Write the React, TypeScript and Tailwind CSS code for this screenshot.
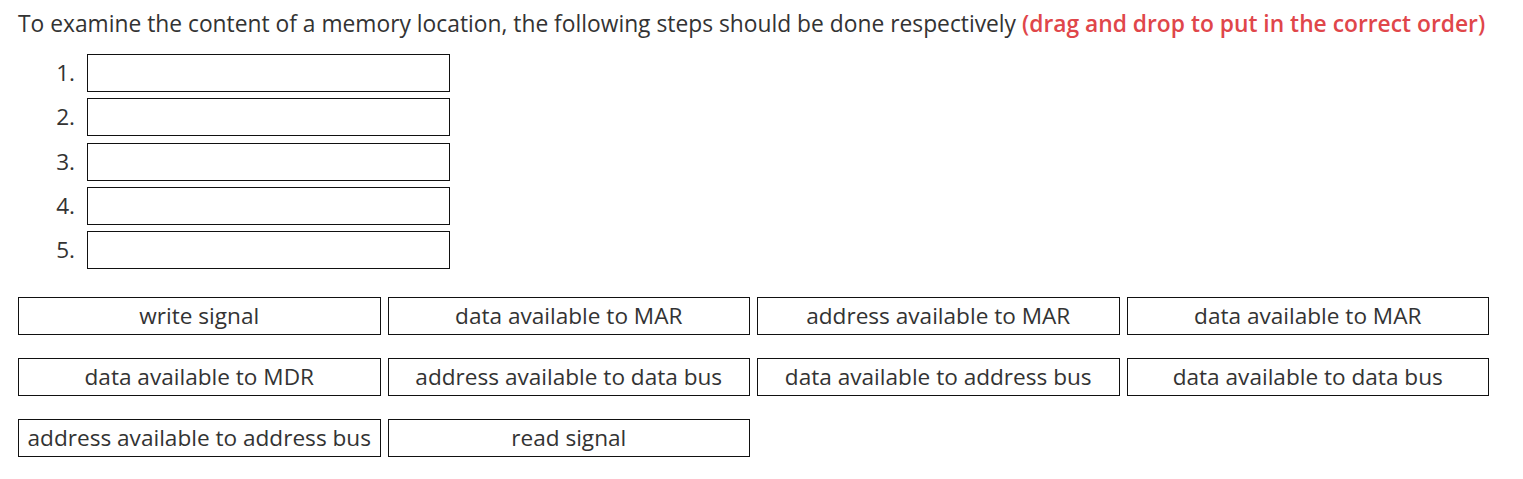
const slots = [1, 2, 3, 4, 5]

const items = [
  'write signal',
  'data available to MAR',
  'address available to MAR',
  'data available to MAR',
  'data available to MDR',
  'address available to data bus',
  'data available to address bus',
  'data available to data bus',
  'address available to address bus',
  'read signal',
]

export default function App() {
  return (
    <div
      className="min-h-[479px] bg-white pl-[18px] pt-[7px] text-[#333333]"
      style={{ fontFamily: '"Open Sans", "Liberation Sans", sans-serif' }}
    >
      {/* Question */}
      <p className="text-[22.8px] leading-[34px] whitespace-nowrap">
        To examine the content of a memory location, the following steps should be done respectively{' '}
        <span className="font-semibold text-[#e0464a]">(drag and drop to put in the correct order)</span>
      </p>

      {/* Drop slots */}
      <ol className="mt-[13px] flex flex-col gap-[6.3px]">
        {slots.map((n) => (
          <li key={n} className="flex items-center">
            <span className="w-[69px] pr-[12px] text-right text-[22.6px]">{n}.</span>
            <div className="h-[38px] w-[363px] border border-[#111111]" />
          </li>
        ))}
      </ol>

      {/* Draggable answers */}
      <div className="mt-[28px] grid w-[1471px] grid-cols-4 gap-x-[7px] gap-y-[23px]">
        {items.map((label, i) => (
          <div
            key={i}
            className="flex h-[38px] items-center justify-center border border-[#111111] text-[22.6px] whitespace-nowrap"
          >
            {label}
          </div>
        ))}
      </div>
    </div>
  )
}
